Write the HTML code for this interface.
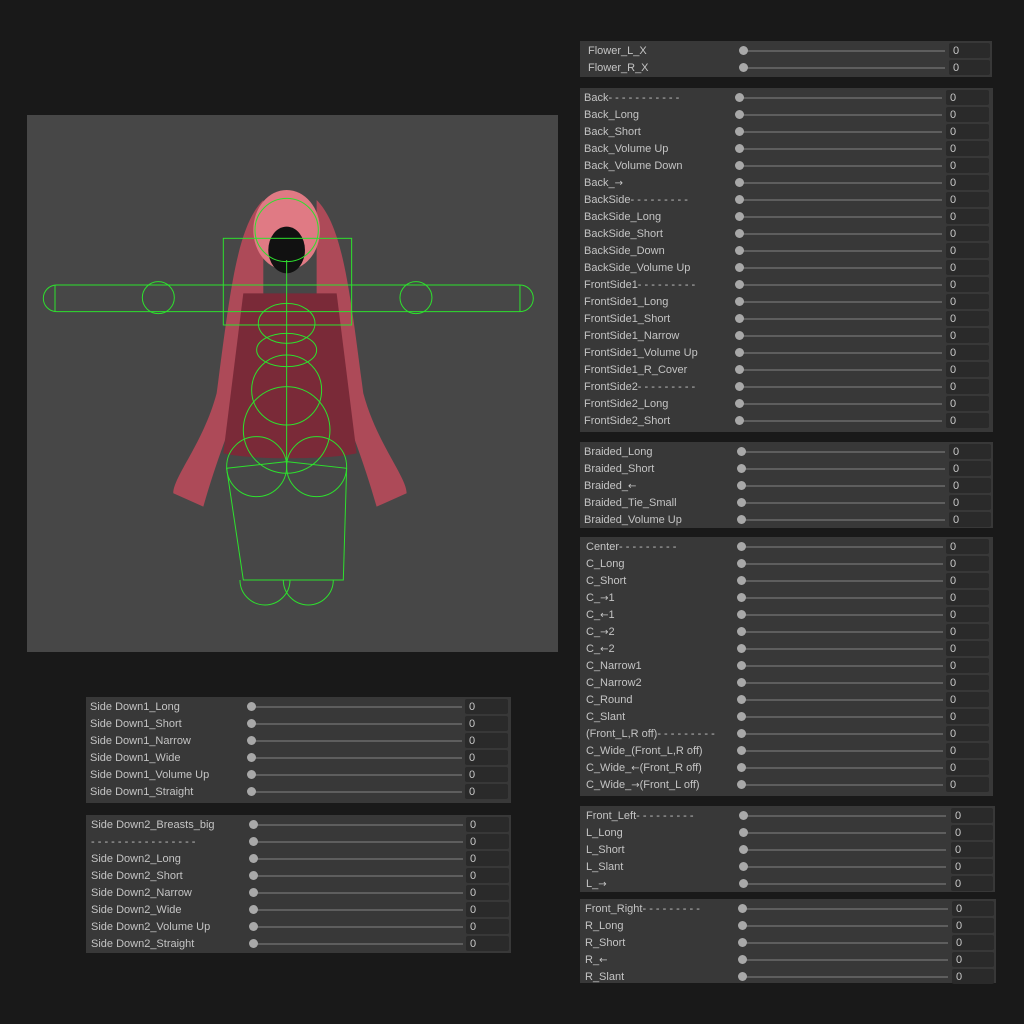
<!DOCTYPE html>
<html><head><meta charset="utf-8"><style>
body{margin:0;width:1024px;height:1024px;background:#191919;position:relative;overflow:hidden;font-family:"Liberation Sans","Noto Sans CJK JP",sans-serif;}
.vp{position:absolute;left:27px;top:115px;width:531px;height:537px;background:#474747;}
.p{position:absolute;background:#383838;padding-top:1px;box-sizing:border-box;}
.r{position:relative;height:17px;}
.r .l{position:absolute;left:var(--lx);top:1px;line-height:17px;font-size:11px;color:#c4c4c4;white-space:nowrap;}
.r .t{position:absolute;left:var(--kx);width:var(--tw);top:8px;height:2px;background:#5e5e5e;}
.r .k{position:absolute;left:calc(var(--kx) - 4px);top:4px;width:9px;height:9px;border-radius:50%;background:#a8a8a8;}
.r .f{position:absolute;left:var(--fx);width:var(--fw);top:1px;height:15px;background:#2a2a2a;border-radius:2px;font-size:11px;color:#c8c8c8;line-height:17px;padding-left:4px;box-sizing:border-box;}
.a{font-family:"DejaVu Sans",sans-serif;font-size:10px;}
</style></head><body>
<div class="vp">
<svg width="531" height="537" viewBox="0 0 531 537">
<g transform="translate(3,45) scale(0.3333)">
<path d="M700 120 C620 200 600 400 560 700 C520 850 430 950 430 1000 L520 1040 C560 900 600 800 640 700 L700 400 Z" fill="#b84a5a" opacity="0.9"/>
<path d="M860 120 C940 200 960 400 1000 700 C1040 850 1130 950 1130 1000 L1040 1040 C1000 900 960 800 920 700 L860 400 Z" fill="#b84a5a" opacity="0.9"/>
<path d="M640 400 L920 400 L980 880 C900 900 660 900 580 880 Z" fill="#7a2a38"/>
<ellipse cx="770" cy="210" rx="100" ry="120" fill="#e07a84"/>
<ellipse cx="770" cy="270" rx="55" ry="70" fill="#111"/>
<g fill="none" stroke="#2ee02e" stroke-width="3">
<rect x="40" y="375" width="1470" height="80" rx="40"/>
<line x1="75" y1="375" x2="75" y2="455"/><line x1="1470" y1="375" x2="1470" y2="455"/>
<circle cx="385" cy="413" r="48"/><circle cx="1158" cy="413" r="48"/>
<rect x="580" y="235" width="385" height="260"/>
<circle cx="770" cy="210" r="95"/>
<ellipse cx="770" cy="490" rx="85" ry="60"/><ellipse cx="770" cy="570" rx="90" ry="50"/>
<circle cx="770" cy="690" r="105"/><circle cx="770" cy="810" r="130"/>
<circle cx="680" cy="920" r="90"/><circle cx="860" cy="920" r="90"/>
<path d="M590 925 L770 905 L950 925 L940 1260 L640 1260 Z"/>
<path d="M630 1260 A75 75 0 0 0 780 1260 M760 1260 A75 75 0 0 0 910 1260"/>
<line x1="770" y1="300" x2="770" y2="910"/>
</g></g></svg>
</div>

<div class="p" style="left:580px;top:41px;width:412px;height:36px;--lx:8px;--kx:163px;--tw:202px;--fx:369px;--fw:41px">
<div class="r"><span class="l">Flower_L_X</span><i class="t"></i><i class="k"></i><span class="f">0</span></div>
<div class="r"><span class="l">Flower_R_X</span><i class="t"></i><i class="k"></i><span class="f">0</span></div>
</div>

<div class="p" style="left:580px;top:88px;width:413px;height:344px;--lx:4px;--kx:159px;--tw:203px;--fx:366px;--fw:43px">
<div class="r"><span class="l">Back- - - - - - - - - - -</span><i class="t"></i><i class="k"></i><span class="f">0</span></div>
<div class="r"><span class="l">Back_Long</span><i class="t"></i><i class="k"></i><span class="f">0</span></div>
<div class="r"><span class="l">Back_Short</span><i class="t"></i><i class="k"></i><span class="f">0</span></div>
<div class="r"><span class="l">Back_Volume Up</span><i class="t"></i><i class="k"></i><span class="f">0</span></div>
<div class="r"><span class="l">Back_Volume Down</span><i class="t"></i><i class="k"></i><span class="f">0</span></div>
<div class="r"><span class="l">Back_<span class="a">→</span></span><i class="t"></i><i class="k"></i><span class="f">0</span></div>
<div class="r"><span class="l">BackSide- - - - - - - - -</span><i class="t"></i><i class="k"></i><span class="f">0</span></div>
<div class="r"><span class="l">BackSide_Long</span><i class="t"></i><i class="k"></i><span class="f">0</span></div>
<div class="r"><span class="l">BackSide_Short</span><i class="t"></i><i class="k"></i><span class="f">0</span></div>
<div class="r"><span class="l">BackSide_Down</span><i class="t"></i><i class="k"></i><span class="f">0</span></div>
<div class="r"><span class="l">BackSide_Volume Up</span><i class="t"></i><i class="k"></i><span class="f">0</span></div>
<div class="r"><span class="l">FrontSide1- - - - - - - - -</span><i class="t"></i><i class="k"></i><span class="f">0</span></div>
<div class="r"><span class="l">FrontSide1_Long</span><i class="t"></i><i class="k"></i><span class="f">0</span></div>
<div class="r"><span class="l">FrontSide1_Short</span><i class="t"></i><i class="k"></i><span class="f">0</span></div>
<div class="r"><span class="l">FrontSide1_Narrow</span><i class="t"></i><i class="k"></i><span class="f">0</span></div>
<div class="r"><span class="l">FrontSide1_Volume Up</span><i class="t"></i><i class="k"></i><span class="f">0</span></div>
<div class="r"><span class="l">FrontSide1_R_Cover</span><i class="t"></i><i class="k"></i><span class="f">0</span></div>
<div class="r"><span class="l">FrontSide2- - - - - - - - -</span><i class="t"></i><i class="k"></i><span class="f">0</span></div>
<div class="r"><span class="l">FrontSide2_Long</span><i class="t"></i><i class="k"></i><span class="f">0</span></div>
<div class="r"><span class="l">FrontSide2_Short</span><i class="t"></i><i class="k"></i><span class="f">0</span></div>
</div>

<div class="p" style="left:580px;top:442px;width:413px;height:86px;--lx:4px;--kx:161px;--tw:204px;--fx:369px;--fw:42px">
<div class="r"><span class="l">Braided_Long</span><i class="t"></i><i class="k"></i><span class="f">0</span></div>
<div class="r"><span class="l">Braided_Short</span><i class="t"></i><i class="k"></i><span class="f">0</span></div>
<div class="r"><span class="l">Braided_<span class="a">←</span></span><i class="t"></i><i class="k"></i><span class="f">0</span></div>
<div class="r"><span class="l">Braided_Tie_Small</span><i class="t"></i><i class="k"></i><span class="f">0</span></div>
<div class="r"><span class="l">Braided_Volume Up</span><i class="t"></i><i class="k"></i><span class="f">0</span></div>
</div>

<div class="p" style="left:580px;top:537px;width:413px;height:259px;--lx:6px;--kx:161px;--tw:202px;--fx:366px;--fw:43px">
<div class="r"><span class="l">Center- - - - - - - - -</span><i class="t"></i><i class="k"></i><span class="f">0</span></div>
<div class="r"><span class="l">C_Long</span><i class="t"></i><i class="k"></i><span class="f">0</span></div>
<div class="r"><span class="l">C_Short</span><i class="t"></i><i class="k"></i><span class="f">0</span></div>
<div class="r"><span class="l">C_<span class="a">→</span>1</span><i class="t"></i><i class="k"></i><span class="f">0</span></div>
<div class="r"><span class="l">C_<span class="a">←</span>1</span><i class="t"></i><i class="k"></i><span class="f">0</span></div>
<div class="r"><span class="l">C_<span class="a">→</span>2</span><i class="t"></i><i class="k"></i><span class="f">0</span></div>
<div class="r"><span class="l">C_<span class="a">←</span>2</span><i class="t"></i><i class="k"></i><span class="f">0</span></div>
<div class="r"><span class="l">C_Narrow1</span><i class="t"></i><i class="k"></i><span class="f">0</span></div>
<div class="r"><span class="l">C_Narrow2</span><i class="t"></i><i class="k"></i><span class="f">0</span></div>
<div class="r"><span class="l">C_Round</span><i class="t"></i><i class="k"></i><span class="f">0</span></div>
<div class="r"><span class="l">C_Slant</span><i class="t"></i><i class="k"></i><span class="f">0</span></div>
<div class="r"><span class="l">(Front_L,R off)- - - - - - - - -</span><i class="t"></i><i class="k"></i><span class="f">0</span></div>
<div class="r"><span class="l">C_Wide_(Front_L,R off)</span><i class="t"></i><i class="k"></i><span class="f">0</span></div>
<div class="r"><span class="l">C_Wide_<span class="a">←</span>(Front_R off)</span><i class="t"></i><i class="k"></i><span class="f">0</span></div>
<div class="r"><span class="l">C_Wide_<span class="a">→</span>(Front_L off)</span><i class="t"></i><i class="k"></i><span class="f">0</span></div>
</div>

<div class="p" style="left:580px;top:806px;width:415px;height:86px;--lx:6px;--kx:163px;--tw:203px;--fx:371px;--fw:42px">
<div class="r"><span class="l">Front_Left- - - - - - - - -</span><i class="t"></i><i class="k"></i><span class="f">0</span></div>
<div class="r"><span class="l">L_Long</span><i class="t"></i><i class="k"></i><span class="f">0</span></div>
<div class="r"><span class="l">L_Short</span><i class="t"></i><i class="k"></i><span class="f">0</span></div>
<div class="r"><span class="l">L_Slant</span><i class="t"></i><i class="k"></i><span class="f">0</span></div>
<div class="r"><span class="l">L_<span class="a">→</span></span><i class="t"></i><i class="k"></i><span class="f">0</span></div>
</div>

<div class="p" style="left:580px;top:899px;width:416px;height:84px;--lx:5px;--kx:162px;--tw:206px;--fx:372px;--fw:42px">
<div class="r"><span class="l">Front_Right- - - - - - - - -</span><i class="t"></i><i class="k"></i><span class="f">0</span></div>
<div class="r"><span class="l">R_Long</span><i class="t"></i><i class="k"></i><span class="f">0</span></div>
<div class="r"><span class="l">R_Short</span><i class="t"></i><i class="k"></i><span class="f">0</span></div>
<div class="r"><span class="l">R_<span class="a">←</span></span><i class="t"></i><i class="k"></i><span class="f">0</span></div>
<div class="r"><span class="l">R_Slant</span><i class="t"></i><i class="k"></i><span class="f">0</span></div>
</div>

<div class="p" style="left:86px;top:697px;width:425px;height:106px;--lx:4px;--kx:165px;--tw:211px;--fx:379px;--fw:43px">
<div class="r"><span class="l">Side Down1_Long</span><i class="t"></i><i class="k"></i><span class="f">0</span></div>
<div class="r"><span class="l">Side Down1_Short</span><i class="t"></i><i class="k"></i><span class="f">0</span></div>
<div class="r"><span class="l">Side Down1_Narrow</span><i class="t"></i><i class="k"></i><span class="f">0</span></div>
<div class="r"><span class="l">Side Down1_Wide</span><i class="t"></i><i class="k"></i><span class="f">0</span></div>
<div class="r"><span class="l">Side Down1_Volume Up</span><i class="t"></i><i class="k"></i><span class="f">0</span></div>
<div class="r"><span class="l">Side Down1_Straight</span><i class="t"></i><i class="k"></i><span class="f">0</span></div>
</div>

<div class="p" style="left:86px;top:815px;width:425px;height:138px;--lx:5px;--kx:167px;--tw:210px;--fx:380px;--fw:43px">
<div class="r"><span class="l">Side Down2_Breasts_big</span><i class="t"></i><i class="k"></i><span class="f">0</span></div>
<div class="r"><span class="l">- - - - - - - - - - - - - - - -</span><i class="t"></i><i class="k"></i><span class="f">0</span></div>
<div class="r"><span class="l">Side Down2_Long</span><i class="t"></i><i class="k"></i><span class="f">0</span></div>
<div class="r"><span class="l">Side Down2_Short</span><i class="t"></i><i class="k"></i><span class="f">0</span></div>
<div class="r"><span class="l">Side Down2_Narrow</span><i class="t"></i><i class="k"></i><span class="f">0</span></div>
<div class="r"><span class="l">Side Down2_Wide</span><i class="t"></i><i class="k"></i><span class="f">0</span></div>
<div class="r"><span class="l">Side Down2_Volume Up</span><i class="t"></i><i class="k"></i><span class="f">0</span></div>
<div class="r"><span class="l">Side Down2_Straight</span><i class="t"></i><i class="k"></i><span class="f">0</span></div>
</div>
</body></html>
